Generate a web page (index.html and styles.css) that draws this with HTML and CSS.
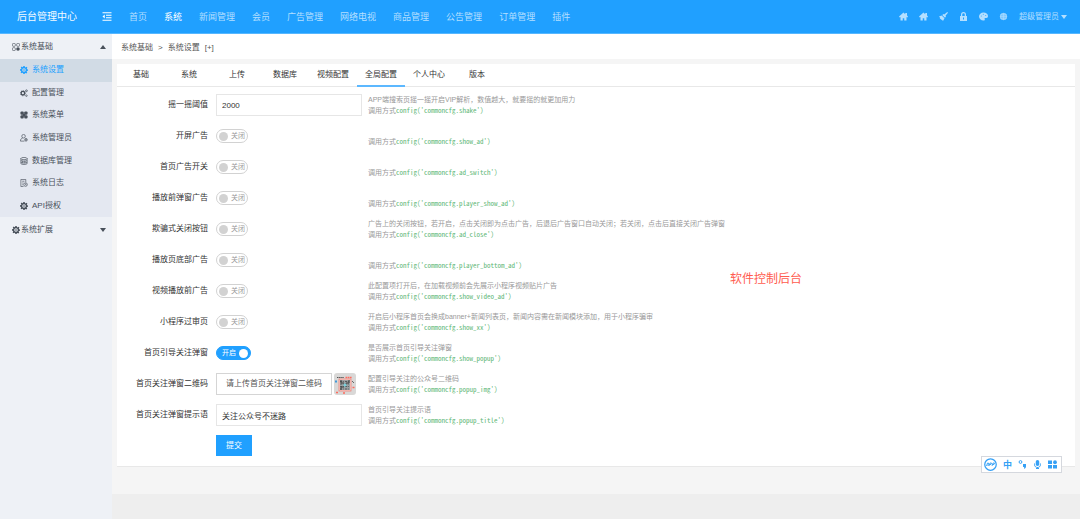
FILE: index.html
```html
<!DOCTYPE html>
<html lang="zh-CN">
<head>
<meta charset="utf-8">
<title>后台管理中心</title>
<link rel="stylesheet" href="styles.css">
</head>
<body>
<svg class="sprite" aria-hidden="true">
  <symbol id="home" viewBox="0 0 18 16"><path d="M9 0 0 8l1.500 2L3 9.200V16h4.500v-4.500h3V16H15V9.200l1.500.8L18 8l-2-1.800V1h-3.500v2.500z"/></symbol>
  <symbol id="broom" viewBox="0 0 18 18"><path d="M16.500 0L18 1.500l-5 6 1 1.500-2 2.500L6.500 6l2.500-2 1.500 1zM5.500 7l5.500 5.500L8 18l-2.500-3-1 1-1-2-2-.5 1-1.500L0 9z"/></symbol>
  <symbol id="lock" viewBox="0 0 16 18"><path fill-rule="evenodd" d="M1 8h2V5a5 5 0 0 1 10 0v3h2v10H1zM5.500 8h5V5a2.500 2.500 0 0 0-5 0zM7 11v4h2v-4z"/></symbol>
  <symbol id="palette" viewBox="0 0 18 18"><path fill-rule="evenodd" d="M9 1c5 0 9 3 9 7s-3 4-5 4-2 1-1.500 2.500S11 17 9 17c-5 0-9-4-9-8s4-8 9-8zM3.500 8a1 1 0 1 0 2 0 1 1 0 0 0-2 0zm4-3.500a1 1 0 1 0 2 0 1 1 0 0 0-2 0zM12.500 7a1 1 0 1 0 2 0 1 1 0 0 0-2 0z"/></symbol>
  <symbol id="globe" viewBox="0 0 18 18"><circle cx="9" cy="9" r="7" opacity=".6"/><path d="M2 9h14M9 2v14M3 5.500h12M3 12.500h12" fill="none" stroke="currentColor" stroke-width="1"/><circle cx="9" cy="9" r="6.500" fill="none" stroke="currentColor" stroke-width="1"/></symbol>
  <symbol id="gear" viewBox="0 0 18 18"><path fill-rule="evenodd" d="M7.500 0h3l.5 2.500 1.500.6L14.600 1.700l2.100 2.100-1.400 2.100.6 1.500 2.100.4v3l-2.400.5-.6 1.500 1.400 2.100-2.100 2.100-2.100-1.400-1.500.6L10.500 18h-3L7 15.600l-1.500-.6-2.100 1.400-2.100-2.100 1.400-2.100L2.100 10.800 0 10.500v-3L2.500 7l.6-1.500-1.400-2.100 2.100-2.100 2.100 1.400L7 2.100zM9 5a4 4 0 1 0 0 8 4 4 0 0 0 0-8z"/><circle cx="9" cy="9" r="1.800"/></symbol>
  <symbol id="gears" viewBox="0 0 18 18"><circle cx="6.500" cy="9.500" r="4" fill="none" stroke="currentColor" stroke-width="3"/><circle cx="6.500" cy="9.500" r="5.800" fill="none" stroke="currentColor" stroke-width="1.500" stroke-dasharray="2.500 2"/><circle cx="14.500" cy="4" r="2" fill="none" stroke="currentColor" stroke-width="1.800"/><circle cx="14.500" cy="15" r="1.800" fill="none" stroke="currentColor" stroke-width="1.500"/></symbol>
  <symbol id="clover" viewBox="0 0 18 18"><rect x="1" y="1" width="7.500" height="7.500" rx="2.500"/><rect x="9.500" y="1" width="7.500" height="7.500" rx="2.500"/><rect x="1" y="9.500" width="7.500" height="7.500" rx="2.500"/><rect x="9.500" y="9.500" width="7.500" height="7.500" rx="2.500"/><rect x="6" y="6" width="6" height="6"/></symbol>
  <symbol id="modules" viewBox="0 0 18 18"><g fill="none" stroke="currentColor" stroke-width="1.500"><rect x="1" y="1" width="6.500" height="6.500" rx="2"/><rect x="10.500" y="1" width="6.500" height="6.500" rx="2"/><rect x="1" y="10.500" width="6.500" height="6.500" rx="2"/></g><circle cx="13.500" cy="13.500" r="4"/></symbol>
  <symbol id="admin" viewBox="0 0 18 18"><g fill="none" stroke="currentColor" stroke-width="1.500"><circle cx="8" cy="5" r="4"/><path d="M10 16H1c0-4 2-6.500 5-7"/><circle cx="13.500" cy="13" r="3"/><path d="M13.500 11.500v3M12 13h3"/></g></symbol>
  <symbol id="database" viewBox="0 0 18 18"><g fill="none" stroke="currentColor" stroke-width="1.500"><path d="M2 3v12c2 2.500 12 2.500 14 0V3"/><ellipse cx="9" cy="3.500" rx="7" ry="2.500"/><path d="M2 8c2 2 12 2 14 0M2 12c2 2 12 2 14 0M6 8v6M11 8v6"/></g></symbol>
  <symbol id="log" viewBox="0 0 18 18"><g fill="none" stroke="currentColor" stroke-width="1.500"><path d="M8 17H2V1h11v6M5 5h5M5 9h3M5 13h2"/><circle cx="12.500" cy="12.500" r="4"/><path d="M12.500 10v3h2"/></g></symbol>
</svg>

<header class="topbar">
  <a class="brand" href="#">后台管理中心</a>
  <button class="collapse" type="button" aria-label="收起菜单">
    <svg viewBox="0 0 20 18"><path d="M1 1.500h18M8 6.500h11M8 11.500h11M1 16.500h18" stroke="currentColor" stroke-width="2" fill="none"/><path d="M5.500 5v8L1 9z"/></svg>
  </button>
  <nav class="mainnav">
    <a href="#">首页</a>
    <a class="current" href="#">系统</a>
    <a href="#">新闻管理</a>
    <a href="#">会员</a>
    <a href="#">广告管理</a>
    <a href="#">网络电视</a>
    <a href="#">商品管理</a>
    <a href="#">公告管理</a>
    <a href="#">订单管理</a>
    <a href="#">插件</a>
  </nav>
  <div class="tools">
    <a href="#" aria-label="前台"><svg><use href="#home"/></svg></a>
    <a href="#" aria-label="主页"><svg><use href="#home"/></svg></a>
    <a href="#" aria-label="清理缓存"><svg><use href="#broom"/></svg></a>
    <a href="#" aria-label="锁屏"><svg><use href="#lock"/></svg></a>
    <a href="#" aria-label="主题"><svg><use href="#palette"/></svg></a>
    <a href="#" aria-label="语言"><svg><use href="#globe"/></svg></a>
    <button class="user" type="button">超级管理员<span class="caret down"></span></button>
  </div>
</header>

<div class="shell">
  <aside class="sidebar">
    <button class="group" type="button"><svg><use href="#modules"/></svg>系统基础<span class="caret up"></span></button>
    <nav class="submenu">
      <a class="current" href="#"><svg><use href="#gear"/></svg>系统设置</a>
      <a href="#"><svg><use href="#gears"/></svg>配置管理</a>
      <a href="#"><svg><use href="#clover"/></svg>系统菜单</a>
      <a href="#"><svg><use href="#admin"/></svg>系统管理员</a>
      <a href="#"><svg><use href="#database"/></svg>数据库管理</a>
      <a href="#"><svg><use href="#log"/></svg>系统日志</a>
      <a href="#"><svg><use href="#gear"/></svg>API授权</a>
    </nav>
    <button class="group" type="button"><svg><use href="#gear"/></svg>系统扩展<span class="caret down"></span></button>
  </aside>

  <main class="main">
    <div class="crumbs"><a href="#">系统基础</a><span>&gt;</span><a href="#">系统设置</a><a href="#">[+]</a></div>
    <div class="content">
      <section class="card">
        <nav class="tabs">
          <a href="#">基础</a>
          <a href="#">系统</a>
          <a href="#">上传</a>
          <a href="#">数据库</a>
          <a href="#">视频配置</a>
          <a class="current" href="#">全局配置</a>
          <a href="#">个人中心</a>
          <a href="#">版本</a>
        </nav>
        <form class="form">
          <div class="row">
            <label class="name" for="shake">摇一摇阈值</label>
            <div class="field"><input class="text" id="shake" type="text" value="2000"></div>
            <p class="hint">APP端搜索页摇一摇开启VIP解析，数值越大，就要摇的就更加用力<br>调用方式<code>config('commoncfg.shake')</code></p>
          </div>
          <div class="row">
            <label class="name" for="show_ad">开屏广告</label>
            <div class="field"><label class="switch"><input id="show_ad" type="checkbox"><span>关闭</span></label></div>
            <p class="hint"><br>调用方式<code>config('commoncfg.show_ad')</code></p>
          </div>
          <div class="row">
            <label class="name" for="ad_switch">首页广告开关</label>
            <div class="field"><label class="switch"><input id="ad_switch" type="checkbox"><span>关闭</span></label></div>
            <p class="hint"><br>调用方式<code>config('commoncfg.ad_switch')</code></p>
          </div>
          <div class="row">
            <label class="name" for="player_show_ad">播放前弹窗广告</label>
            <div class="field"><label class="switch"><input id="player_show_ad" type="checkbox"><span>关闭</span></label></div>
            <p class="hint"><br>调用方式<code>config('commoncfg.player_show_ad')</code></p>
          </div>
          <div class="row">
            <label class="name" for="ad_close">欺骗式关闭按钮</label>
            <div class="field"><label class="switch"><input id="ad_close" type="checkbox"><span>关闭</span></label></div>
            <p class="hint">广告上的关闭按钮，若开启，点击关闭即为点击广告，后退后广告窗口自动关闭；若关闭，点击后直接关闭广告弹窗<br>调用方式<code>config('commoncfg.ad_close')</code></p>
          </div>
          <div class="row">
            <label class="name" for="player_bottom_ad">播放页底部广告</label>
            <div class="field"><label class="switch"><input id="player_bottom_ad" type="checkbox"><span>关闭</span></label></div>
            <p class="hint"><br>调用方式<code>config('commoncfg.player_bottom_ad')</code></p>
          </div>
          <div class="row">
            <label class="name" for="show_video_ad">视频播放前广告</label>
            <div class="field"><label class="switch"><input id="show_video_ad" type="checkbox"><span>关闭</span></label></div>
            <p class="hint">此配置项打开后，在加载视频前会先展示小程序视频贴片广告<br>调用方式<code>config('commoncfg.show_video_ad')</code></p>
          </div>
          <div class="row">
            <label class="name" for="show_xx">小程序过审页</label>
            <div class="field"><label class="switch"><input id="show_xx" type="checkbox"><span>关闭</span></label></div>
            <p class="hint">开启后小程序首页会换成banner+新闻列表页，新闻内容需在新闻模块添加，用于小程序骗审<br>调用方式<code>config('commoncfg.show_xx')</code></p>
          </div>
          <div class="row">
            <label class="name" for="show_popup">首页引导关注弹窗</label>
            <div class="field"><label class="switch on"><input id="show_popup" type="checkbox" checked><span>开启</span></label></div>
            <p class="hint">是否展示首页引导关注弹窗<br>调用方式<code>config('commoncfg.show_popup')</code></p>
          </div>
          <div class="row">
            <label class="name" for="popup_img">首页关注弹窗二维码</label>
            <div class="field">
              <button class="upload" id="popup_img" type="button">请上传首页关注弹窗二维码</button>
              <svg class="thumb" viewBox="0 0 22 22" role="img" aria-label="二维码">
                <rect width="22" height="22" rx="3" fill="#d9d8d7"/>
                <path d="M3 4.500h7" stroke="#555" stroke-width="1.200" stroke-dasharray="1.500 .6"/>
                <path d="M11.500 4.500H18" stroke="#ff6b5e" stroke-width="1.500" stroke-dasharray="1.700 .5"/>
                <rect x="5" y="6" width="12" height="12" fill="#f4d5d0" stroke="#f2786d" stroke-width=".7"/>
                <rect x="6" y="7" width="10" height="10" fill="#9da1a3"/>
                <path d="M6 8.500h10M6 11h10M6 13.500h10M6 16h10" stroke="#555a5d" stroke-width="1.200" stroke-dasharray="2 .8 1 1.200"/>
                <path d="M7 7v3h3M15 7v3h-3M7 17v-3h3" fill="none" stroke="#444" stroke-width="1"/>
                <circle cx="11" cy="12" r="1.500" fill="#7ad0dc"/>
                <path d="M1 8.500h2" stroke="#4298d8" stroke-width="2"/>
                <path d="M18 8l2 2" stroke="#666" stroke-width="1"/>
                <path d="M18.500 14.500h2M2 19.500h2M9 20h2" stroke="#ff6b5e" stroke-width="1.300"/>
              </svg>
            </div>
            <p class="hint">配置引导关注的公众号二维码<br>调用方式<code>config('commoncfg.popup_img')</code></p>
          </div>
          <div class="row">
            <label class="name" for="popup_title">首页关注弹窗提示语</label>
            <div class="field"><input class="text" id="popup_title" type="text" value="关注公众号不迷路"></div>
            <p class="hint">首页引导关注提示语<br>调用方式<code>config('commoncfg.popup_title')</code></p>
          </div>
          <div class="row">
            <span class="name"></span>
            <div class="field"><button class="submit" type="submit">提交</button></div>
          </div>
        </form>
      </section>
    </div>
  </main>
</div>

<div class="note">软件控制后台</div>

<div class="ime">
  <svg class="ime-logo" viewBox="0 0 26 26"><circle cx="13" cy="13" r="11.500" fill="none" stroke="currentColor" stroke-width="2.500"/><path d="M5 16l2-6h2l-1 6M10 16l2-6h3l-1 3h-3M16 16l2-6h3l-1 3h-3" fill="none" stroke="currentColor" stroke-width="1.800"/></svg>
  <span>中</span>
  <svg viewBox="0 0 18 18"><circle cx="5" cy="4" r="2.800" fill="none" stroke="currentColor" stroke-width="2"/><path d="M10 8h6v5c0 2-1.500 4-4 4.500V15l1-1h-3z"/></svg>
  <svg viewBox="0 0 18 18"><rect x="5.500" y="0" width="7" height="12" rx="3.500"/><path d="M3 7v2c0 8 12 8 12 0V7M9 14v3M6 17h6" fill="none" stroke="currentColor" stroke-width="2"/></svg>
  <svg viewBox="0 0 18 18"><path d="M0 1h8v7H0zM0 10h8v7H0zM10 10h8v7h-8z"/><circle cx="14" cy="4.500" r="3.800"/></svg>
</div>
</body>
</html>
```
FILE: styles.css
```css
* { box-sizing: border-box; }

body {
  margin: 0;
  min-height: 100vh;
  display: flex;
  flex-direction: column;
  background: #eee;
  color: #333;
  font-family: "Liberation Sans", "Noto Sans CJK SC", sans-serif;
  font-size: 8px;
  line-height: 12px;
}

a { color: inherit; text-decoration: none; }
button, input { font: inherit; color: inherit; margin: 0; }
button { border: 0; padding: 0; background: none; cursor: pointer; }
svg { display: block; flex: none; width: 9px; height: 9px; fill: currentColor; }
.sprite { position: absolute; width: 0; height: 0; }

.topbar {
  display: flex;
  align-items: center;
  height: 34px;
  padding: 0 13px 0 17px;
  background: #20a0ff;
  border-bottom: 1px solid #56b7ff;
  color: #b4dfff;
}
.brand { width: 85px; color: #f4faff; font-size: 10px; }
.collapse { width: 27px; color: #fff; }
.collapse svg { width: 10px; }
.mainnav { display: flex; gap: 17px; font-size: 9px; }
.mainnav .current { color: #fff; }
.tools { display: flex; align-items: center; gap: 11px; margin-left: auto; }
.user { display: flex; align-items: center; gap: 2px; }

.caret { border: 3px solid transparent; }
.caret.down { border-top: 4px solid currentColor; border-bottom: 0; }
.caret.up { border-bottom: 4px solid currentColor; border-top: 0; }

.shell { display: flex; flex: 1; }
.sidebar { width: 112px; flex: none; background: #eef1f6; color: #48505a; }
.sidebar svg { width: 8px; height: 8px; }
.group { display: flex; align-items: center; gap: 1px; width: 100%; height: 25px; padding: 0 6px 0 12px; }
.group .caret { margin-left: auto; }
.submenu { display: grid; grid-auto-rows: 1fr; min-height: 158px; background: #e4e8f1; }
.submenu a { display: flex; align-items: center; gap: 4px; padding-left: 20px; }
.submenu .current { background: #d1dbe5; color: #20a0ff; }

.main { flex: 1; min-width: 0; }
.crumbs { display: flex; align-items: center; gap: 5px; height: 25px; padding: 2px 9px 0; background: #fff; color: #555; }
.content { padding: 5px 5px 27px; background: #f5f5f5; }
.card { background: #fff; border-bottom: 1px solid #e8e8e8; }
.tabs { display: flex; height: 23px; border-bottom: 1px solid #e8e8e8; }
.tabs a { width: 48px; height: 23px; line-height: 22px; text-align: center; }
.tabs .current { border-bottom: 2px solid #5cb8ff; }

.form { display: grid; gap: 9px; padding: 7px 0 10px; }
.row { display: grid; grid-template-columns: 91px 154px 1fr; height: 22px; }
.row:last-child { height: 21px; }
.name { padding-top: 5px; text-align: right; }
.field { display: flex; align-items: center; gap: 2px; padding-left: 8px; }
.hint { margin: 0 0 0 6px; color: #999; font-size: 7px; line-height: 11px; }
.hint code { color: #5fb878; font-family: "Noto Sans Mono CJK SC", "Liberation Mono", monospace; font-size: 7px; line-height: 10px; }
.text { width: 100%; height: 22px; padding: 0 5px; border: 1px solid #e6e6e6; background: #fff; outline: 0; }

.switch { display: flex; align-items: center; gap: 3px; height: 14px; padding: 0 2px; border: 1px solid #d2d2d2; border-radius: 7px; background: #fff; color: #999; font-size: 7px; }
.switch input { appearance: none; width: 9px; height: 9px; border-radius: 50%; background: #d2d2d2; }
.switch.on { flex-direction: row-reverse; padding-left: 5px; border-color: #20a0ff; background: #20a0ff; color: #fff; }
.switch.on input { background: #fff; }

.upload { height: 22px; padding: 0 9px; border: 1px solid #d5d5d5; background: #fff; color: #555; white-space: nowrap; }
.thumb { width: 22px; height: 22px; }
.submit { width: 36px; height: 21px; background: #20a0ff; color: #fff; }

.note { position: absolute; left: 730px; top: 271px; color: #ff5c50; font-size: 12px; line-height: 16px; }

.ime { position: fixed; right: 18px; bottom: 46px; display: flex; align-items: center; gap: 6px; height: 17px; padding: 0 4px 0 2px; border: 1px solid #d5d8de; background: #fff; color: #35a0f5; font-size: 9px; font-weight: bold; }
.ime-logo { width: 13px; height: 13px; }
```
